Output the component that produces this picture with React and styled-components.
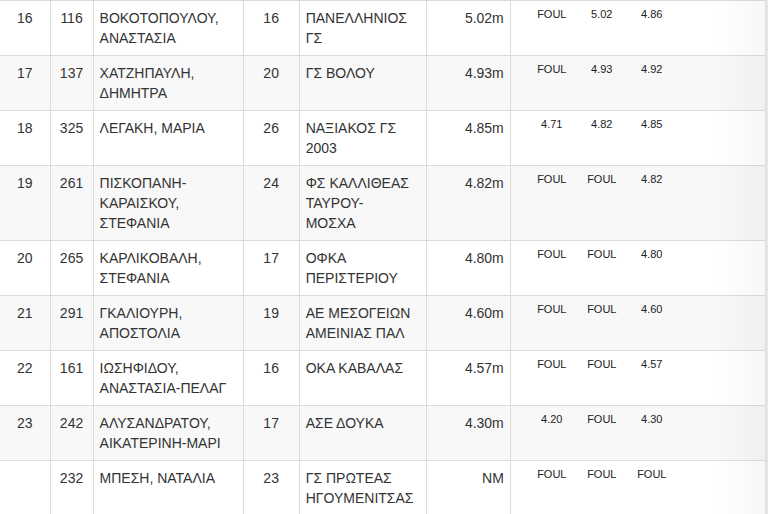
import styled, { createGlobalStyle } from "styled-components";

const columns = [50, 43, 150, 56, 127, 84, 255];

const results = [
  { pos: "16", bib: "116", name: "ΒΟΚΟΤΟΠΟΥΛΟΥ,\nΑΝΑΣΤΑΣΙΑ", age: "16", club: "ΠΑΝΕΛΛΗΝΙΟΣ\nΓΣ", mark: "5.02m", tries: ["FOUL", "5.02", "4.86"] },
  { pos: "17", bib: "137", name: "ΧΑΤΖΗΠΑΥΛΗ,\nΔΗΜΗΤΡΑ", age: "20", club: "ΓΣ ΒΟΛΟΥ", mark: "4.93m", tries: ["FOUL", "4.93", "4.92"] },
  { pos: "18", bib: "325", name: "ΛΕΓΑΚΗ, ΜΑΡΙΑ", age: "26", club: "ΝΑΞΙΑΚΟΣ ΓΣ\n2003", mark: "4.85m", tries: ["4.71", "4.82", "4.85"] },
  { pos: "19", bib: "261", name: "ΠΙΣΚΟΠΑΝΗ-\nΚΑΡΑΙΣΚΟΥ,\nΣΤΕΦΑΝΙΑ", age: "24", club: "ΦΣ ΚΑΛΛΙΘΕΑΣ\nΤΑΥΡΟΥ-\nΜΟΣΧΑ", mark: "4.82m", tries: ["FOUL", "FOUL", "4.82"] },
  { pos: "20", bib: "265", name: "ΚΑΡΛΙΚΟΒΑΛΗ,\nΣΤΕΦΑΝΙΑ", age: "17", club: "ΟΦΚΑ\nΠΕΡΙΣΤΕΡΙΟΥ", mark: "4.80m", tries: ["FOUL", "FOUL", "4.80"] },
  { pos: "21", bib: "291", name: "ΓΚΑΛΙΟΥΡΗ,\nΑΠΟΣΤΟΛΙΑ", age: "19", club: "ΑΕ ΜΕΣΟΓΕΙΩΝ\nΑΜΕΙΝΙΑΣ ΠΑΛ", mark: "4.60m", tries: ["FOUL", "FOUL", "4.60"] },
  { pos: "22", bib: "161", name: "ΙΩΣΗΦΙΔΟΥ,\nΑΝΑΣΤΑΣΙΑ-ΠΕΛΑΓ", age: "16", club: "ΟΚΑ ΚΑΒΑΛΑΣ", mark: "4.57m", tries: ["FOUL", "FOUL", "4.57"] },
  { pos: "23", bib: "242", name: "ΑΛΥΣΑΝΔΡΑΤΟΥ,\nΑΙΚΑΤΕΡΙΝΗ-ΜΑΡΙ", age: "17", club: "ΑΣΕ ΔΟΥΚΑ", mark: "4.30m", tries: ["4.20", "FOUL", "4.30"] },
  { pos: "", bib: "232", name: "ΜΠΕΣΗ, ΝΑΤΑΛΙΑ", age: "23", club: "ΓΣ ΠΡΩΤΕΑΣ\nΗΓΟΥΜΕΝΙΤΣΑΣ", mark: "NM", tries: ["FOUL", "FOUL", "FOUL"] },
];

export default function App() {
  return (
    <>
      <GlobalStyle />
      <Page>
        <ResultsTable>
          <colgroup>
            {columns.map((w, i) => (
              <Col key={i} $w={w} />
            ))}
          </colgroup>
          <tbody>
            {results.map((r, i) => (
              <Row key={r.bib} $striped={i % 2 === 1}>
                <Cell $align="center">{r.pos}</Cell>
                <Cell $align="center">{r.bib}</Cell>
                <Cell>{r.name}</Cell>
                <Cell $align="center">{r.age}</Cell>
                <Cell>{r.club}</Cell>
                <Cell $align="right">{r.mark}</Cell>
                <Cell>
                  <Attempts>
                    {r.tries.map((t, j) => (
                      <Attempt key={j}>{t}</Attempt>
                    ))}
                  </Attempts>
                </Cell>
              </Row>
            ))}
          </tbody>
        </ResultsTable>
      </Page>
    </>
  );
}

const GlobalStyle = createGlobalStyle`
  body {
    margin: 0;
    background: #e9e9e9;
    font-family: "Liberation Sans", Arial, Helvetica, sans-serif;
    color: #333;
  }
`;

const Page = styled.div`
  position: relative;
  width: 768px;
  height: 514px;
  overflow: hidden;
  background: #e6e6e6;

  &::after {
    content: "";
    position: absolute;
    top: 0;
    bottom: 0;
    right: 3px;
    width: 50px;
    background: linear-gradient(to right, rgba(0, 0, 0, 0), rgba(0, 0, 0, 0.03));
    pointer-events: none;
  }
`;

const ResultsTable = styled.table`
  width: 766px;
  table-layout: fixed;
  border-collapse: collapse;
  background: #fff;
  font-size: 14px;
  line-height: 20px;
`;

const Col = styled.col`
  width: ${(p) => p.$w}px;
`;

const Row = styled.tr`
  background: ${(p) => (p.$striped ? "#f8f8f8" : "#fff")};
`;

const Cell = styled.td`
  padding: 7px 6px;
  border: 1px solid #dcdcdc;
  vertical-align: top;
  text-align: ${(p) => p.$align || "left"};
  white-space: pre-line;

  &:first-child {
    border-left: none;
  }
`;

const Attempts = styled.div`
  display: grid;
  grid-template-columns: repeat(3, 50px);
  margin-left: 10px;
  margin-top: -1px;
  font-size: 11px;
  line-height: 15px;
  color: #222;
`;

const Attempt = styled.span`
  text-align: center;
`;
